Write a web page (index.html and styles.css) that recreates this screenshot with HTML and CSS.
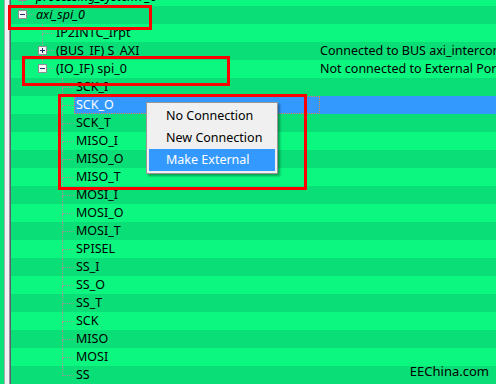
FILE: index.html
```html
<!DOCTYPE html>
<html lang="en">
<head>
    <meta charset="UTF-8">
    <title>axi_spi_0 ports</title>
    <link rel="stylesheet" href="styles.css">
</head>
<body>
    <div class="screen">
        <div class="gutter"></div>
        <ul class="tree">
            <li class="row lv1">
                <svg class="exp" width="16" height="18" viewBox="0 0 16 18"><path class="ln" d="M4.5 0V4M4.5 13V18M9 8.5H16"/><rect x="0.5" y="4.5" width="8" height="8"/><path class="sign" d="M2 8.5H7"/></svg>
                <span class="label it">processing_system7_0</span><span class="desc"></span>
            </li>
            <li class="row lv1">
                <svg class="exp" width="16" height="18" viewBox="0 0 16 18"><path class="ln" d="M4.5 0V4M9 8.5H16"/><rect x="0.5" y="4.5" width="8" height="8"/><path class="sign" d="M2 8.5H7"/></svg>
                <span class="label it">axi_spi_0</span><span class="desc"></span>
            </li>
            <li class="row lv2"><span class="branch"></span><span class="label">IP2INTC_Irpt</span><span class="desc"></span></li>
            <li class="row lv2">
                <svg class="exp" width="16" height="18" viewBox="0 0 16 18"><path class="ln" d="M4.5 0V4M4.5 13V18M9 8.5H16"/><rect x="0.5" y="4.5" width="8" height="8"/><path class="sign" d="M2 8.5H7M4.5 6V11"/></svg>
                <span class="label">(BUS_IF) S_AXI</span><span class="desc">Connected to BUS axi_interconnect_1</span>
            </li>
            <li class="row lv2">
                <svg class="exp" width="16" height="18" viewBox="0 0 16 18"><path class="ln" d="M4.5 0V4M9 8.5H16"/><rect x="0.5" y="4.5" width="8" height="8"/><path class="sign" d="M2 8.5H7"/></svg>
                <span class="label">(IO_IF) spi_0</span><span class="desc">Not connected to External Ports</span>
            </li>
            <li class="row lv3"><span class="branch"></span><span class="label">SCK_I</span><span class="desc"></span></li>
            <li class="row lv3 sel"><span class="branch"></span><span class="label">SCK_O</span><span class="desc"></span></li>
            <li class="row lv3"><span class="branch"></span><span class="label">SCK_T</span><span class="desc"></span></li>
            <li class="row lv3"><span class="branch"></span><span class="label">MISO_I</span><span class="desc"></span></li>
            <li class="row lv3"><span class="branch"></span><span class="label">MISO_O</span><span class="desc"></span></li>
            <li class="row lv3"><span class="branch"></span><span class="label">MISO_T</span><span class="desc"></span></li>
            <li class="row lv3"><span class="branch"></span><span class="label">MOSI_I</span><span class="desc"></span></li>
            <li class="row lv3"><span class="branch"></span><span class="label">MOSI_O</span><span class="desc"></span></li>
            <li class="row lv3"><span class="branch"></span><span class="label">MOSI_T</span><span class="desc"></span></li>
            <li class="row lv3"><span class="branch"></span><span class="label">SPISEL</span><span class="desc"></span></li>
            <li class="row lv3"><span class="branch"></span><span class="label">SS_I</span><span class="desc"></span></li>
            <li class="row lv3"><span class="branch"></span><span class="label">SS_O</span><span class="desc"></span></li>
            <li class="row lv3"><span class="branch"></span><span class="label">SS_T</span><span class="desc"></span></li>
            <li class="row lv3"><span class="branch"></span><span class="label">SCK</span><span class="desc"></span></li>
            <li class="row lv3"><span class="branch"></span><span class="label">MISO</span><span class="desc"></span></li>
            <li class="row lv3"><span class="branch"></span><span class="label">MOSI</span><span class="desc"></span></li>
            <li class="row lv3"><span class="branch last"></span><span class="label">SS</span><span class="desc"></span></li>
        </ul>

        <!-- annotations -->
        <div class="mark m1"></div>
        <div class="mark m2"></div>
        <div class="mark m3"></div>

        <ul class="menu">
            <li>No Connection</li>
            <li>New Connection</li>
            <li class="on">Make External</li>
        </ul>

        <p class="wm">EEChina.com</p>
    </div>
</body>
</html>
```

FILE: styles.css
```css
/* reset */
* {box-sizing: border-box;}
body, ul, p {margin: 0; padding: 0;}
li {list-style: none;}
body {overflow: hidden; font-family: "Noto Sans", "Liberation Sans", sans-serif; font-size: 12.5px; color: #000;}

.screen {position: relative; display: flex; width: 496px; height: 384px; overflow: hidden; background: #0cf780;}

/* left splitter */
.gutter {flex: 0 0 11px;
    background: linear-gradient(to right, #0ae078 0 4px, #a8a8b0 4px 5px, #f2f2f6 5px 9px, #9a9aa0 9px 10px, #5c5c6c 10px 11px);}

/* tree */
.tree {flex: 1; margin-top: -12px;}
.row {display: flex; height: 18px; line-height: 18px; white-space: nowrap; background: #0cf780;}
.row:nth-child(even) {background: #0ade77;}
.lv1 {padding-left: 7px;}
.lv2 {padding-left: 27px;}
.lv3 {padding-left: 47px;}

.exp {flex: 0 0 16px; display: block;}
.exp .ln {stroke: #a0a0a0; stroke-dasharray: 1 1; fill: none;}
.exp rect {fill: #f6f6f6; stroke: #8e8f95;}
.exp .sign {stroke: #25306a; fill: none;}

.branch {display: flex; flex-direction: column; align-items: flex-start; flex: 0 0 11px; margin-left: 4px;}
.branch::before {content: ""; width: 11px; height: 9px;
    border-left: 1px dotted #9a9a9a; border-bottom: 1px dotted #9a9a9a;}
.branch::after {content: ""; flex: 1; border-left: 1px dotted #9a9a9a;}
.branch.last::after {border-left-color: transparent;}

.label {flex: 1; padding-left: 2px; overflow: hidden;}
.it {font-style: italic;}
.desc {flex: 0 0 176px; overflow: hidden;}
.sel .label, .sel .desc {background: #3399ff; color: #fff;}
.sel .label {outline: 1px dotted #e08a3c; outline-offset: -1px;}

/* red annotation boxes */
.mark {position: absolute; border: 3px solid #ff0000;}
.m1 {left: 8px; top: 5px; width: 144px; height: 25px;}
.m2 {left: 22px; top: 56px; width: 208px; height: 30px;}
.m3 {left: 58px; top: 94px; width: 249px; height: 96px;}

/* context menu */
.menu {position: absolute; left: 146px; top: 102px; width: 132px; padding: 2px;
    background: #f0f0f0; border: 1px solid #979797;
    box-shadow: 2px 2px 2px rgba(0, 0, 0, .35);}
.menu li {height: 22px; line-height: 22px; padding-left: 17px;}
.menu li.on {background: #3399ff; color: #fff;}

/* watermark */
.wm {position: absolute; right: 7px; bottom: 4px; font-size: 13px; color: #000;}
```
